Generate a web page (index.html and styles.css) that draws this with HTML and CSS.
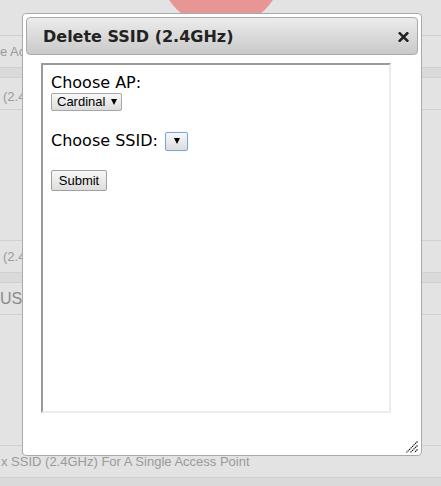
FILE: index.html
```html
<!DOCTYPE html>
<html>
<head>
<meta charset="utf-8">
<link rel="stylesheet" href="styles.css">
</head>
<body>
<div class="page">
  <div class="spacer"></div>
  <section class="sec">
    <div class="row"><span class="t">e Access Point</span></div>
    <div class="band"></div>
    <div class="row row-b"><span class="t pad3">(2.4GHz)</span></div>
    <div class="body"></div>
  </section>
  <section class="sec">
    <div class="row"><span class="t pad3">(2.4GHz)</span></div>
    <div class="band"></div>
    <div class="row row-b"><span class="t big">US</span></div>
    <div class="body"></div>
  </section>
  <section class="sec">
    <div class="row"><span class="t pad1">x SSID (2.4GHz) For A Single Access Point</span></div>
    <div class="band"></div>
  </section>
</div>

<div class="blob"></div>

<div class="dialog">
  <div class="titlebar">
    <span class="title">Delete SSID (2.4GHz)</span>
    <svg class="close" width="11" height="10" viewBox="0 0 11 10"><path d="M1.8 1.3 L9.2 8.7 M9.2 1.3 L1.8 8.7" stroke="#222" stroke-width="2.6" stroke-linecap="square"/></svg>
  </div>
  <div class="content">
    <div class="frame">
      <form class="form">
        <label class="lbl">Choose AP:</label>
        <div class="sel sel-ap">
          <select class="select"><option>Cardinal</option></select>
        </div>
        <div class="line-ssid">
          <label class="lbl">Choose SSID:</label>
          <div class="sel sel-ssid">
            <select class="select focus"><option></option></select>
          </div>
        </div>
        <button type="button" class="btn">Submit</button>
      </form>
    </div>
  </div>
  <svg class="grip" width="12" height="12" viewBox="0 0 12 12">
    <path d="M11.5 0.5 L0.5 11.5 M11.5 4.5 L4.5 11.5 M11.5 8.5 L8.5 11.5" stroke="#111" stroke-width="1.1" stroke-dasharray="1.4 0.7"/>
  </svg>
</div>
</body>
</html>
```

FILE: styles.css
```css
html, body {
  margin: 0;
  padding: 0;
}
body {
  width: 441px;
  height: 486px;
  overflow: hidden;
  background: #e3e3e3;
  position: relative;
  font-family: "Liberation Sans", Arial, sans-serif;
}
.page {
  display: flex;
  flex-direction: column;
}
.spacer {
  height: 35px;
}
.sec {
  display: flex;
  flex-direction: column;
}
.row {
  height: 31px;
  border-top: 1px solid #d0d0d0;
  display: flex;
  align-items: center;
  overflow: hidden;
  white-space: nowrap;
}
.row-b {
  border-bottom: 1px solid #d0d0d0;
  padding-top: 5px;
  box-sizing: content-box;
  height: 26px;
}
.band {
  height: 9px;
  border-top: 1px solid #d0d0d0;
  background: #dadada;
}
.body {
  height: 130px;
}
.t {
  font-size: 13px;
  color: #9a9a9a;
}
.pad3 { padding-left: 3px; }
.pad1 { padding-left: 1px; }
.big {
  font-size: 16px;
  color: #8a8a8a;
  margin-top: -5px;
}

.blob {
  position: absolute;
  left: 159px;
  top: -96px;
  width: 124px;
  height: 124px;
  border-radius: 50%;
  background: #e79595;
}

.dialog {
  position: absolute;
  left: 22px;
  top: 13px;
  width: 400px;
  height: 443px;
  box-sizing: border-box;
  background: #fff;
  border: 1px solid #aaaaaa;
  border-radius: 4px;
  padding: 3px;
  display: flex;
  flex-direction: column;
}
.titlebar {
  height: 38px;
  box-sizing: border-box;
  border: 1px solid #aaaaaa;
  border-radius: 4px;
  background: linear-gradient(#ececec, #c9c9c9);
  display: flex;
  align-items: center;
  justify-content: space-between;
  padding: 0 8px 0 16px;
}
.title {
  font-family: "DejaVu Sans", Verdana, sans-serif;
  font-weight: bold;
  font-size: 16px;
  color: #222;
  padding-top: 1px;
}
.close {
  display: block;
  margin-top: 1px;
}
.content {
  padding: 8px 15px;
}
.frame {
  width: 350px;
  height: 350px;
  box-sizing: border-box;
  border-style: solid;
  border-width: 2px;
  border-color: #9a9a9a #ececec #ececec #9a9a9a;
  background: #fff;
}
.form {
  margin: 8px;
  display: flex;
  flex-direction: column;
  align-items: flex-start;
}
.lbl {
  font-family: "DejaVu Sans", Verdana, sans-serif;
  font-size: 16px;
  line-height: 19px;
  color: #000;
}
.sel {
  position: relative;
  display: inline-block;
}
.sel::after {
  content: "";
  position: absolute;
  top: 7px;
  border-left: 3px solid transparent;
  border-right: 3px solid transparent;
  border-top: 6px solid #000;
  pointer-events: none;
}
.sel-ap::after { left: 60px; }
.sel-ssid::after { left: 9px; top: 7px; }
.select {
  appearance: none;
  -webkit-appearance: none;
  font-family: "Liberation Sans", Arial, sans-serif;
  font-size: 13px;
  color: #000;
  height: 18px;
  margin: 0;
  padding: 0 0 0 5px;
  border: 1px solid #a6a6a6;
  border-radius: 2px;
  background: linear-gradient(#f8f8f8, #dcdcdc);
  box-sizing: border-box;
  outline: none;
  line-height: 16px;
}
.sel-ap .select {
  width: 71px;
}
.sel-ssid .select {
  width: 23px;
  height: 19px;
}
.select.focus {
  border-color: #7ea4dd;
  box-shadow: 0 0 1px #9fc0f0;
}
.line-ssid {
  display: flex;
  align-items: center;
  gap: 7px;
  margin-top: 20px;
}
.btn {
  margin-top: 19px;
  width: 56px;
  height: 21px;
  padding: 0;
  font-family: "Liberation Sans", Arial, sans-serif;
  font-size: 13px;
  color: #000;
  border: 1px solid #a0a0a0;
  border-radius: 2px;
  background: linear-gradient(#f7f7f7, #dddddd);
}
.grip {
  position: absolute;
  right: 3px;
  bottom: 2px;
}
```
